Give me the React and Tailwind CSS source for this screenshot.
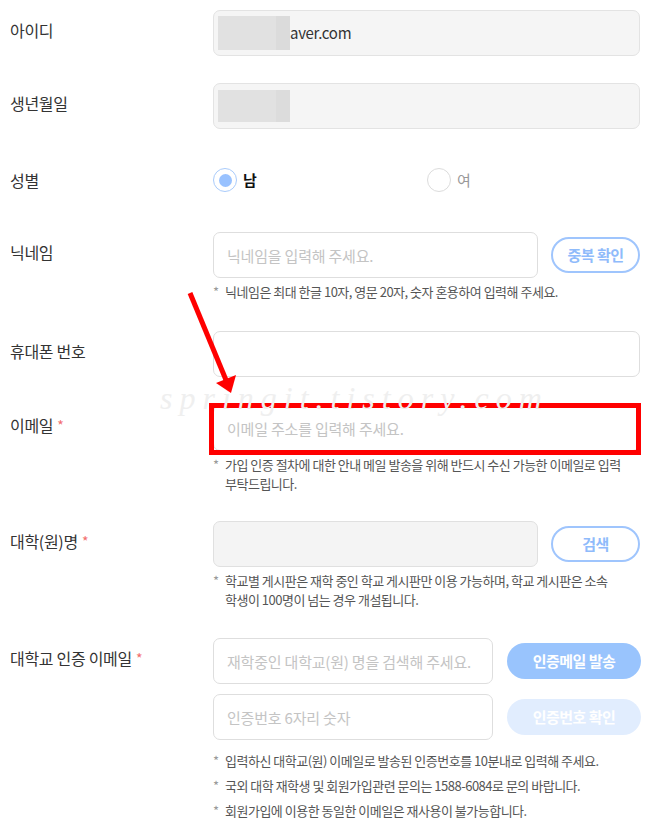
import React from 'react';

const font = { fontFamily: '"Noto Sans CJK KR", "Noto Sans", sans-serif' };

function Label({ children, required }) {
    return (
        <div className="w-[203px] shrink-0 pt-[8px] text-[16px] leading-[24px] tracking-[-0.3px] text-[#333]">
            {children}
            {required && <span className="ml-[4px] text-[14px] text-[#f26d6d] align-top">*</span>}
        </div>
    );
}

function Note({ children, className = '' }) {
    return (
        <div className={`flex text-[13px] leading-[19px] tracking-[-0.5px] text-[#555] ${className}`}>
            <span className="w-[12px] shrink-0 text-[#999]">*</span>
            <span>{children}</span>
        </div>
    );
}

function TextInput({ placeholder, className = '' }) {
    return (
        <input
            type="text"
            placeholder={placeholder}
            className={`h-[46px] rounded-[7px] border border-[#dedede] bg-white px-[13px] text-[15px] tracking-[-0.2px] text-[#333] placeholder-[#c4c4c4] outline-none ${className}`}
            style={font}
        />
    );
}

function OutlineButton({ children }) {
    return (
        <button className="h-[36px] w-[89px] shrink-0 rounded-full border-2 border-[#9fc5fd] bg-white text-[15px] font-bold tracking-[-0.5px] text-[#8fbbfb]">
            {children}
        </button>
    );
}

export default function App() {
    return (
        <div className="relative w-[658px] bg-white pt-[10px] pl-[10px] pr-[18px] pb-[8px]" style={font}>
            {/* 아이디 */}
            <div className="flex mb-[27px]">
                <Label>아이디</Label>
                <div className="flex h-[46px] flex-1 items-center rounded-[7px] border border-[#e3e3e3] bg-[#f5f5f5] px-[4px]">
                    <div className="flex h-[34px]">
                        <div className="w-[58px] bg-[#e1e1e1]" />
                        <div className="w-[14px] bg-[#dbdbdb]" />
                    </div>
                    <span className="text-[15px] tracking-[-0.3px] text-[#333]">aver.com</span>
                </div>
            </div>

            {/* 생년월일 */}
            <div className="flex mb-[28px]">
                <Label>생년월일</Label>
                <div className="flex h-[46px] flex-1 items-center rounded-[7px] border border-[#e3e3e3] bg-[#f5f5f5] px-[4px]">
                    <div className="flex h-[32px]">
                        <div className="w-[58px] bg-[#e1e1e1]" />
                        <div className="w-[14px] bg-[#dcdcdc]" />
                    </div>
                </div>
            </div>

            {/* 성별 */}
            <div className="flex h-[46px] items-center mb-[29px]">
                <div className="w-[203px] shrink-0 text-[16px] tracking-[-0.3px] text-[#333]">성별</div>
                <div className="flex flex-1">
                    <label className="flex w-[214px] items-center gap-[6px]">
                        <span className="flex h-[24px] w-[24px] items-center justify-center rounded-full border border-[#a9cbfb] bg-white">
                            <span className="h-[13px] w-[13px] rounded-full bg-[#99c2ff]" />
                        </span>
                        <span className="text-[15px] font-bold text-[#111]">남</span>
                    </label>
                    <label className="flex items-center gap-[6px]">
                        <span className="h-[24px] w-[24px] rounded-full border border-[#dcdcdc] bg-white" />
                        <span className="text-[15px] text-[#999]">여</span>
                    </label>
                </div>
            </div>

            {/* 닉네임 */}
            <div className="flex mb-[30px]">
                <Label>닉네임</Label>
                <div className="flex-1">
                    <div className="flex items-center gap-[13px]">
                        <TextInput placeholder="닉네임을 입력해 주세요." className="w-[325px]" />
                        <OutlineButton>중복 확인</OutlineButton>
                    </div>
                    <Note className="mt-[4px]">닉네임은 최대 한글 10자, 영문 20자, 숫자 혼용하여 입력해 주세요.</Note>
                </div>
            </div>

            {/* 휴대폰 번호 */}
            <div className="flex mb-[28px]">
                <Label>휴대폰 번호</Label>
                <TextInput className="flex-1 min-w-0" />
            </div>

            {/* 이메일 */}
            <div className="flex mb-[28px]">
                <Label required>이메일</Label>
                <div className="flex-1">
                    <div className="relative flex">
                        <TextInput placeholder="이메일 주소를 입력해 주세요." className="flex-1 min-w-0" />
                        <div className="pointer-events-none absolute -top-[2px] -bottom-[4px] -left-[4px] -right-[1px] border-[5px] border-[#ff0000]" />
                    </div>
                    <Note className="mt-[4px]">
                        가입 인증 절차에 대한 안내 메일 발송을 위해 반드시 수신 가능한 이메일로 입력
                        <br />
                        부탁드립니다.
                    </Note>
                </div>
            </div>

            {/* 대학(원)명 */}
            <div className="flex mb-[29px]">
                <Label required>대학(원)명</Label>
                <div className="flex-1">
                    <div className="flex items-center gap-[13px]">
                        <div className="h-[46px] w-[325px] rounded-[7px] border border-[#e0e0e0] bg-[#f4f4f4]" />
                        <OutlineButton>검색</OutlineButton>
                    </div>
                    <Note className="mt-[4px]">
                        학교별 게시판은 재학 중인 학교 게시판만 이용 가능하며, 학교 게시판은 소속
                        <br />
                        학생이 100명이 넘는 경우 개설됩니다.
                    </Note>
                </div>
            </div>

            {/* 대학교 인증 이메일 */}
            <div className="flex">
                <Label required>대학교 인증 이메일</Label>
                <div className="flex-1">
                    <div className="flex items-center gap-[14px]">
                        <TextInput placeholder="재학중인 대학교(원) 명을 검색해 주세요." className="w-[280px]" />
                        <button className="h-[36px] w-[134px] shrink-0 rounded-full bg-[#99c4fd] text-[15px] font-bold tracking-[-0.5px] text-white">
                            인증메일 발송
                        </button>
                    </div>
                    <div className="mt-[10px] flex items-center gap-[14px]">
                        <TextInput placeholder="인증번호 6자리 숫자" className="w-[280px]" />
                        <button className="h-[36px] w-[134px] shrink-0 rounded-full bg-[#e1edfe] text-[15px] font-bold tracking-[-0.5px] text-white">
                            인증번호 확인
                        </button>
                    </div>
                    <Note className="mt-[11px]">입력하신 대학교(원) 이메일로 발송된 인증번호를 10분내로 입력해 주세요.</Note>
                    <Note className="mt-[6px]">국외 대학 재학생 및 회원가입관련 문의는 1588-6084로 문의 바랍니다.</Note>
                    <Note className="mt-[6px]">회원가입에 이용한 동일한 이메일은 재사용이 불가능합니다.</Note>
                </div>
            </div>

            {/* watermark */}
            <div
                className="pointer-events-none absolute left-[160px] top-[374px] text-[32px] font-light italic tracking-[7px] text-[#efefef]"
                style={{ fontFamily: '"Liberation Serif", serif' }}
            >
                springit.tistory.com
            </div>

            {/* annotation arrow */}
            <svg className="pointer-events-none absolute left-0 top-0" width="658" height="826">
                <line x1="190" y1="293" x2="226" y2="380" stroke="#ff0000" strokeWidth="5" />
                <polygon points="231,393 216,383 236,375" fill="#ff0000" />
            </svg>
        </div>
    );
}
